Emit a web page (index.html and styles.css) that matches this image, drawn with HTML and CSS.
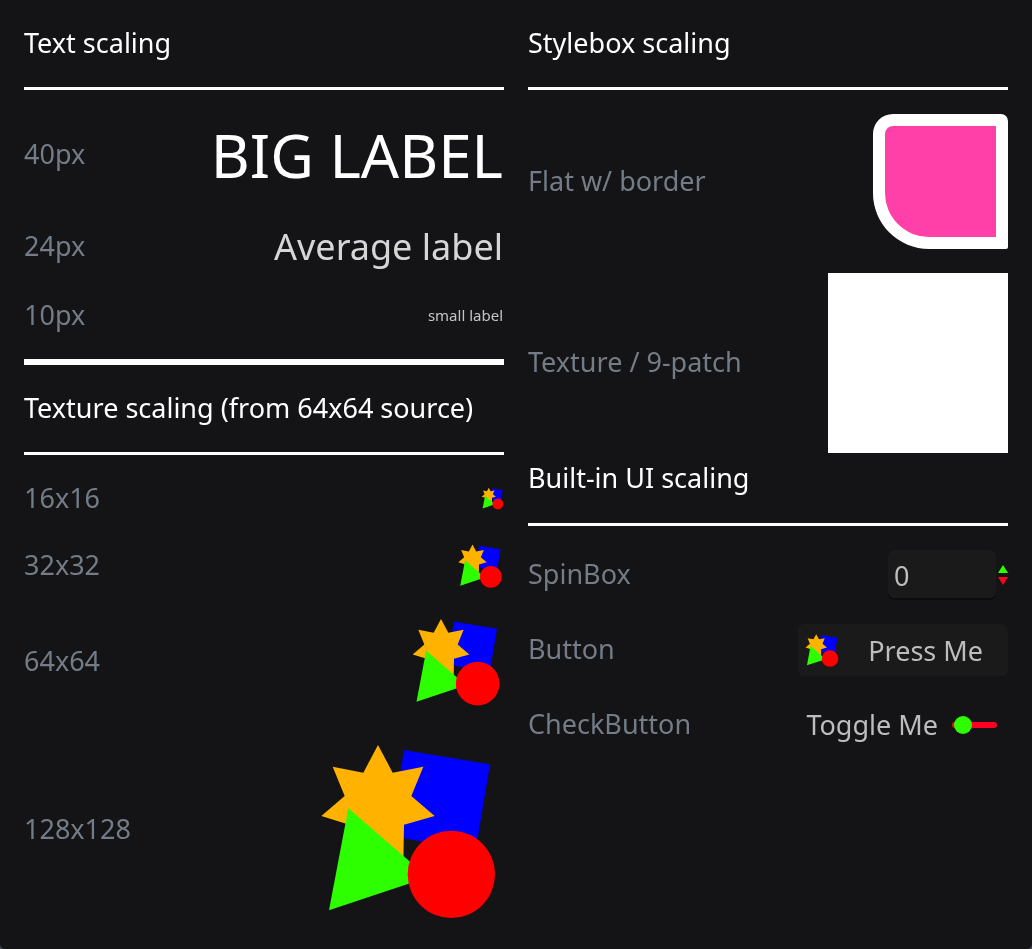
FILE: index.html
```html
<!DOCTYPE html>
<html>
<head>
  <meta charset="utf-8">
  <title>UI scaling</title>
  <link rel="stylesheet" href="styles.css">
</head>
<body>
  <svg class="defs" width="0" height="0">
    <symbol id="shapes" viewBox="72 27 540 540" overflow="visible">
      <polygon fill="#0000ff" points="312,60 570,103 527,361 269,318"/>
      <polygon fill="#ffb300" points="234,45 278,128 370,110 334,198 404,258 312,284 310,400 234,360 170,400 148,284 64,258 134,198 98,110 190,128"/>
      <polygon fill="#2dff00" points="145,235 384,442 87,541"/>
      <circle fill="#ff0000" cx="454" cy="433" r="131"/>
    </symbol>
  </svg>

  <div class="panel">
    <div class="column">
      <div class="heading">Text scaling</div>
      <div class="rule"></div>
      <div class="row row-big">
        <span class="name">40px</span>
        <span class="big">BIG LABEL</span>
      </div>
      <div class="row row-average">
        <span class="name">24px</span>
        <span class="average">Average label</span>
      </div>
      <div class="row row-small">
        <span class="name">10px</span>
        <span class="small">small label</span>
      </div>
      <div class="rule thick"></div>

      <div class="heading heading-next">Texture scaling (from 64x64 source)</div>
      <div class="rule"></div>
      <div class="row row-16">
        <span class="name">16x16</span>
        <svg class="icon icon-16"><use href="#shapes"/></svg>
      </div>
      <div class="row row-32">
        <span class="name">32x32</span>
        <svg class="icon icon-32"><use href="#shapes"/></svg>
      </div>
      <div class="row row-64">
        <span class="name">64x64</span>
        <svg class="icon icon-64"><use href="#shapes"/></svg>
      </div>
      <div class="row row-128">
        <span class="name">128x128</span>
        <svg class="icon icon-128"><use href="#shapes"/></svg>
      </div>
    </div>

    <div class="column">
      <div class="heading">Stylebox scaling</div>
      <div class="rule"></div>
      <div class="row row-flat">
        <span class="name">Flat w/ border</span>
        <div class="flat-box"></div>
      </div>
      <div class="row row-patch">
        <span class="name name-high">Texture / 9-patch</span>
        <div class="patch-box"></div>
      </div>

      <div class="heading heading-builtin">Built-in UI scaling</div>
      <div class="rule"></div>
      <div class="row row-spin">
        <span class="name">SpinBox</span>
        <div class="spin">
          <div class="spin-field">0</div>
          <div class="spin-arrows">
            <span class="arrow-up"></span>
            <span class="arrow-down"></span>
          </div>
        </div>
      </div>
      <div class="row row-button">
        <span class="name name-high">Button</span>
        <div class="button">
          <svg class="icon icon-button"><use href="#shapes"/></svg>
          <span class="button-text">Press Me</span>
        </div>
      </div>
      <div class="row row-check">
        <span class="name name-high">CheckButton</span>
        <div class="check">
          <span class="check-text">Toggle Me</span>
          <span class="toggle"><span class="knob"></span></span>
        </div>
      </div>
    </div>
  </div>
</body>
</html>
```

FILE: styles.css
```css
html {
  background: #3d4350;
}

body {
  margin: 0;
  overflow: hidden;
  font-family: "Noto Sans", sans-serif;
  font-size: 27px;
}

.defs {
  position: absolute;
}

.panel {
  height: 949px;
  box-sizing: border-box;
  padding: 26px 24px 0;
  display: flex;
  gap: 24px;
  background: #141316;
  border-radius: 0 0 5px 5px;
}

.column {
  width: 480px;
}

/* the reference is upscaled, so all its text is a little soft */
.heading,
.name,
.big,
.average,
.small,
.spin-field,
.button-text,
.check-text {
  filter: blur(0.35px);
}

.heading {
  height: 34px;
  line-height: 34px;
  color: #fff;
}

.heading-next {
  margin-top: 26px;
}

.heading-builtin {
  margin-top: 8px;
}

.heading-builtin + .rule {
  margin-top: 28px;
}

.rule {
  height: 3px;
  margin-top: 27px;
  background: #fff;
}

.rule.thick {
  height: 6px;
  margin-top: 28px;
}

.row {
  display: flex;
  align-items: center;
  justify-content: space-between;
}

.name {
  margin-bottom: 2px;
  color: #737c87;
}

.name-high {
  margin-bottom: 4px;
}

.big {
  margin: 2px 1px 0 0;
  font-size: 60px;
  color: #fff;
}

.average {
  margin-right: 1px;
  font-size: 36px;
  color: #d6d6d6;
}

.small {
  margin-right: 1px;
  font-size: 15px;
  color: #c4c4c4;
}

.row-big { height: 78px; margin-top: 25px; }
.row-average { height: 48px; margin-top: 29px; }
.row-small { height: 32px; margin-top: 29px; }

.row-16 { height: 34px; margin-top: 26px; }
.row-32 { height: 44px; margin-top: 28px; }
.row-64 { height: 90px; margin-top: 29px; }
.row-128 { height: 180px; margin-top: 33px; }

.icon {
  overflow: visible;
}

.icon use {
  overflow: visible;
}

.icon-16 { width: 22.5px; height: 22.5px; }
.icon-32 { width: 45px; height: 45px; }
.icon-64 { width: 90px; height: 90px; }
.icon-128 { width: 180px; height: 180px; }
.icon-button { width: 34px; height: 34px; }

.row-flat { height: 135px; margin-top: 24px; }
.row-patch { height: 180px; margin-top: 24px; }

.flat-box {
  width: 135px;
  height: 135px;
  box-sizing: border-box;
  background: #ff40a8;
  border: 12px solid #fff;
  border-radius: 20px 7px 2px 56px;
}

.patch-box {
  width: 180px;
  height: 180px;
  background: #fff;
}

.row-spin { height: 50px; margin-top: 23px; }
.row-button { height: 52px; margin-top: 25px; }
.row-check { height: 44px; margin-top: 27px; }

.spin {
  display: flex;
  align-items: center;
}

.spin-field {
  width: 108px;
  height: 48px;
  box-sizing: border-box;
  padding-left: 6px;
  line-height: 52px;
  color: #bdbdbd;
  background: #191a19;
  border-radius: 6px;
  box-shadow: 0 2px 0 #0c0c0e;
}

.spin-arrows {
  width: 12px;
  margin-top: 2px;
  display: flex;
  flex-direction: column;
  align-items: flex-end;
  gap: 4px;
}

.arrow-up {
  border: 5px solid transparent;
  border-top: 0;
  border-bottom: 8px solid #2dff00;
}

.arrow-down {
  border: 5px solid transparent;
  border-bottom: 0;
  border-top: 8px solid #ff0022;
}

.button {
  width: 210px;
  height: 52px;
  box-sizing: border-box;
  padding: 0 25px 0 8px;
  display: flex;
  align-items: center;
  justify-content: space-between;
  background: #191a19;
  border-radius: 6px;
}

.button-text,
.check-text {
  color: #bdbdbd;
}

.check-text {
  margin-bottom: 2px;
}

.check {
  display: flex;
  align-items: center;
  gap: 14px;
  padding-right: 11px;
}

.toggle {
  position: relative;
  width: 45px;
  height: 6px;
  background: #ff0022;
  border-radius: 3px;
}

.knob {
  position: absolute;
  left: 2px;
  top: -6px;
  width: 18px;
  height: 18px;
  background: #2dff00;
  border-radius: 50%;
}
```
